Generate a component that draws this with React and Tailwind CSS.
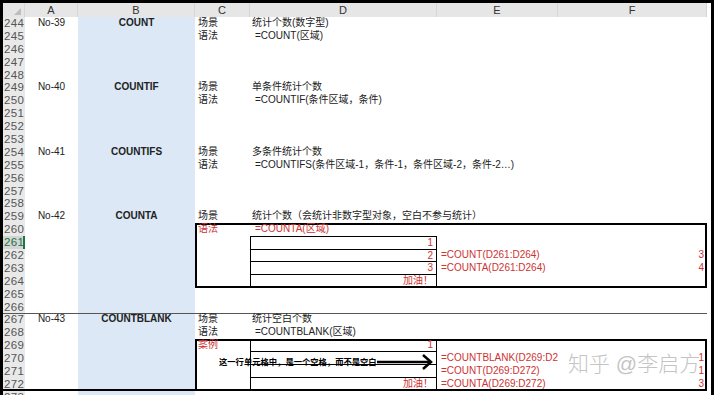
import React from 'react'

const rows = Array.from({ length: 30 }, (_, i) => 244 + i)

const Txt = ({ className = '', children }) => (
  <div className={`leading-[12.9px] whitespace-nowrap ${className}`}>{children}</div>
)

const Dcell = ({ children }) => (
  <div className="h-[12.9px] leading-[11.5px] text-right pr-[3px] text-[#cc3333]">{children}</div>
)

export default function App() {
  return (
    <div className="relative w-[720px] h-[395px] overflow-hidden bg-white font-['Liberation_Sans','Noto_Sans_CJK_SC',sans-serif] text-[10px] text-[#222]">
      <div className="w-[714px] border-l-[3px] border-t-[3px] border-r-[3px] border-black">
        <div className="grid grid-cols-[22px_53px_117px_55px_187px_121px_149px_1fr] grid-rows-[14px_repeat(30,12.9px)]">
          {/* column headers */}
          <div className="col-start-1 row-start-1 bg-[#e6e6e6] border-r border-[#d6d6d6] flex justify-end items-end pr-[3px] pb-[2px]">
            <svg width="7" height="7" viewBox="0 0 7 7">
              <polygon points="7,0 7,7 0,7" fill="#bdbdbd" />
            </svg>
          </div>
          <div className="col-start-2 row-start-1 bg-[#e6e6e6] border-r border-[#d6d6d6] text-center text-[11px] leading-[14px] text-[#333]">A</div>
          <div className="col-start-3 row-start-1 bg-[#e6e6e6] border-r border-[#d6d6d6] text-center text-[11px] leading-[14px] text-[#333]">B</div>
          <div className="col-start-4 row-start-1 bg-[#e6e6e6] border-r border-[#d6d6d6] text-center text-[11px] leading-[14px] text-[#333]">C</div>
          <div className="col-start-5 row-start-1 bg-[#e6e6e6] border-r border-[#d6d6d6] text-center text-[11px] leading-[14px] text-[#333]">D</div>
          <div className="col-start-6 row-start-1 bg-[#e6e6e6] border-r border-[#d6d6d6] text-center text-[11px] leading-[14px] text-[#333]">E</div>
          <div className="col-start-7 row-start-1 bg-[#e6e6e6] border-r border-[#d6d6d6] text-center text-[11px] leading-[14px] text-[#333]">F</div>

          {/* row numbers */}
          <div className="col-start-1 row-start-2 row-span-30 bg-[#e9e9e9] flex flex-col">
            {rows.map((n) =>
              n === 261 ? (
                <div key={n} className="h-[12.9px] shrink-0 leading-[12.9px] pl-[1px] text-[11.5px] tracking-[0.4px] bg-[#d4d4d4] text-[#217346] border-r-2 border-[#217346]">{n}</div>
              ) : (
                <div key={n} className="h-[12.9px] shrink-0 leading-[12.9px] pl-[1px] text-[11.5px] tracking-[0.4px] text-[#555]">{n}</div>
              )
            )}
          </div>

          {/* column B fill */}
          <div className="col-start-3 row-start-2 row-span-30 bg-[#dce8f5]" />

          {/* lines */}
          <div className="col-start-1 col-end-8 row-start-25 border-t border-[#555]" />

          {/* No-39 */}
          <Txt className="col-start-2 row-start-2 text-center">No-39</Txt>
          <Txt className="col-start-3 row-start-2 text-center font-bold">COUNT</Txt>
          <Txt className="col-start-4 row-start-2 pl-[3px]">场景</Txt>
          <Txt className="col-start-5 row-start-2 pl-[2px]">统计个数(数字型)</Txt>
          <Txt className="col-start-4 row-start-3 pl-[3px]">语法</Txt>
          <Txt className="col-start-5 row-start-3 pl-[5px]">=COUNT(区域)</Txt>

          {/* No-40 */}
          <Txt className="col-start-2 row-start-7 text-center">No-40</Txt>
          <Txt className="col-start-3 row-start-7 text-center font-bold">COUNTIF</Txt>
          <Txt className="col-start-4 row-start-7 pl-[3px]">场景</Txt>
          <Txt className="col-start-5 row-start-7 pl-[2px]">单条件统计个数</Txt>
          <Txt className="col-start-4 row-start-8 pl-[3px]">语法</Txt>
          <Txt className="col-start-5 row-start-8 pl-[5px]">=COUNTIF(条件区域，条件)</Txt>

          {/* No-41 */}
          <Txt className="col-start-2 row-start-12 text-center">No-41</Txt>
          <Txt className="col-start-3 row-start-12 text-center font-bold">COUNTIFS</Txt>
          <Txt className="col-start-4 row-start-12 pl-[3px]">场景</Txt>
          <Txt className="col-start-5 row-start-12 pl-[2px]">多条件统计个数</Txt>
          <Txt className="col-start-4 row-start-13 pl-[3px]">语法</Txt>
          <Txt className="col-start-5 row-start-13 pl-[5px]">=COUNTIFS(条件区域-1，条件-1，条件区域-2，条件-2…)</Txt>

          {/* No-42 */}
          <Txt className="col-start-2 row-start-17 text-center">No-42</Txt>
          <Txt className="col-start-3 row-start-17 text-center font-bold">COUNTA</Txt>
          <Txt className="col-start-4 row-start-17 pl-[3px]">场景</Txt>
          <Txt className="col-start-5 row-start-17 pl-[2px]">统计个数（会统计非数字型对象，空白不参与统计）</Txt>

          <div className="col-start-4 col-end-8 row-start-18 row-end-23 border-2 border-black" />
          <Txt className="col-start-4 row-start-18 pl-[3px] text-[#cc3333]">语法</Txt>
          <Txt className="col-start-5 row-start-18 pl-[5px] text-[#cc3333]">=COUNTA(区域)</Txt>
          <div className="col-start-5 row-start-19 row-span-4 flex flex-col border-x border-t border-black divide-y divide-black">
            <Dcell>1</Dcell>
            <Dcell>2</Dcell>
            <Dcell>3</Dcell>
            <Dcell>加油！</Dcell>
          </div>
          <Txt className="col-start-6 row-start-20 pl-[4px] text-[#cc3333]">=COUNT(D261:D264)</Txt>
          <Txt className="col-start-7 row-start-20 text-right pr-[3px] text-[#cc3333]">3</Txt>
          <Txt className="col-start-6 row-start-21 pl-[4px] text-[#cc3333]">=COUNTA(D261:D264)</Txt>
          <Txt className="col-start-7 row-start-21 text-right pr-[3px] text-[#cc3333]">4</Txt>

          {/* No-43 */}
          <Txt className="col-start-2 row-start-25 text-center">No-43</Txt>
          <Txt className="col-start-3 row-start-25 text-center font-bold">COUNTBLANK</Txt>
          <Txt className="col-start-4 row-start-25 pl-[3px]">场景</Txt>
          <Txt className="col-start-5 row-start-25 pl-[2px]">统计空白个数</Txt>
          <Txt className="col-start-4 row-start-26 pl-[3px]">语法</Txt>
          <Txt className="col-start-5 row-start-26 pl-[5px]">=COUNTBLANK(区域)</Txt>

          <div className="col-start-4 col-end-8 row-start-27 row-end-31 border-2 border-black" />
          <Txt className="col-start-4 row-start-27 pl-[3px] text-[#cc3333]">案例</Txt>
          <div className="col-start-5 row-start-27 row-span-4 flex flex-col border-x border-black divide-y divide-black">
            <Dcell>1</Dcell>
            <Dcell></Dcell>
            <Dcell></Dcell>
            <Dcell>加油！</Dcell>
          </div>
          <Txt className="col-start-6 row-start-28 pl-[4px] overflow-hidden text-[#cc3333]">=COUNTBLANK(D269:D272)</Txt>
          <Txt className="col-start-7 row-start-28 text-right pr-[3px] text-[#cc3333]">1</Txt>
          <Txt className="col-start-6 row-start-29 pl-[4px] text-[#cc3333]">=COUNT(D269:D272)</Txt>
          <Txt className="col-start-7 row-start-29 text-right pr-[3px] text-[#cc3333]">1</Txt>
          <Txt className="col-start-6 row-start-30 pl-[4px] text-[#cc3333]">=COUNTA(D269:D272)</Txt>
          <Txt className="col-start-7 row-start-30 text-right pr-[3px] text-[#cc3333]">3</Txt>

          <div className="col-start-1 col-end-8 row-start-30 border-b-2 border-black" />
        </div>
      </div>

      {/* note text box with arrow */}
      <div className="absolute left-[219px] top-[357px] text-[8.3px] leading-[10px] font-bold text-black whitespace-nowrap">
        这一行单元格中，是一个空格，而不是空白
      </div>
      <svg className="absolute left-[376px] top-[352px]" width="60" height="20" viewBox="0 0 60 20">
        <line x1="1" y1="10" x2="54" y2="10" stroke="black" strokeWidth="2.5" />
        <polyline points="47,3 55,10 47,17" fill="none" stroke="black" strokeWidth="2.5" />
      </svg>

      {/* watermark */}
      <div className="absolute left-[568px] top-[353px] text-[21px] leading-none font-light text-[#c4c4c4] whitespace-nowrap">
        知乎 @李启方
      </div>
    </div>
  )
}
